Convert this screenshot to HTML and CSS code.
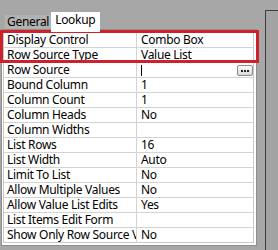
FILE: index.html
```html
<html>
<head>
<meta charset="UTF-8">
<title>Property Sheet - Lookup</title>
<link rel="stylesheet" href="styles.css">
</head>
<body>

<div class="wrap">
	<div class="props">
		<div class="tabs">
			<span class="tab">General</span>
			<span class="tab on">Lookup</span>
		</div>
		<div class="sheet">
			<div class="grid">
				<div class="row"><div class="name">Display Control</div><div class="val">Combo Box</div></div>
				<div class="row"><div class="name">Row Source Type</div><div class="val">Value List</div></div>
				<div class="row"><div class="name">Row Source</div><div class="val"><span class="caret"></span>
					<span class="dots"><svg width="14" height="9" viewBox="0 0 14 9"><rect x="3" y="4" width="2" height="2"/><rect x="6" y="4" width="2" height="2"/><rect x="9" y="4" width="2" height="2"/></svg></span>
				</div></div>
				<div class="row"><div class="name">Bound Column</div><div class="val">1</div></div>
				<div class="row"><div class="name">Column Count</div><div class="val">1</div></div>
				<div class="row"><div class="name">Column Heads</div><div class="val">No</div></div>
				<div class="row"><div class="name">Column Widths</div><div class="val"></div></div>
				<div class="row"><div class="name">List Rows</div><div class="val">16</div></div>
				<div class="row"><div class="name">List Width</div><div class="val">Auto</div></div>
				<div class="row"><div class="name">Limit To List</div><div class="val">No</div></div>
				<div class="row"><div class="name">Allow Multiple Values</div><div class="val">No</div></div>
				<div class="row"><div class="name">Allow Value List Edits</div><div class="val">Yes</div></div>
				<div class="row"><div class="name">List Items Edit Form</div><div class="val"></div></div>
				<div class="row"><div class="name">Show Only Row Source V</div><div class="val">No</div></div>
			</div>
		</div>
	</div>
	<div class="side"></div>
</div>

<!-- highlight round the first two properties -->
<div class="mark"></div>

</body>
</html>
```

FILE: styles.css
```css
body {
	margin: 0px;
	padding: 0px;
	background: #a7a7a7;
	color: #000;
	font-family: "Noto Sans", Arial, sans-serif;
	font-size: 12px;
	letter-spacing: -0.3px;
	width: 278px;
	height: 250px;
	overflow: hidden;
	position: relative;
}

.wrap {
	display: flex;
	height: 250px;
}

.props {
	width: 257px;
}

.tabs {
	display: flex;
	align-items: flex-end;
	height: 17px;
	padding-top: 12px;
	padding-left: 5px;
}

.tab {
	height: 14px;
	line-height: 14px;
	padding: 0px 2px;
	background: #b2b2b2;
	white-space: nowrap;
}

.tab.on {
	position: relative;
	z-index: 1;
	height: 20px;
	line-height: 15px;
	padding: 0px 5px 0px 4px;
	margin-bottom: -3px;
	background: #fff;
}

.sheet {
	margin-left: 1px;
	border: 1px solid #8e8e8e;
	background: #fff;
	padding: 2px 2px 2px 1px;
	width: 251px;
}

.grid {
	border: 1px solid #c9c9c9;
}

.row {
	display: flex;
	height: 14px;
	line-height: 14px;
	border-bottom: 1px solid #d3d3d3;
}

.row:last-child {
	border-bottom: 0px;
}

.name {
	width: 129px;
	padding-left: 3px;
	border-right: 1px solid #d3d3d3;
	white-space: nowrap;
	overflow: hidden;
}

.val {
	flex: 1;
	padding-left: 4px;
	position: relative;
	white-space: nowrap;
}

.caret {
	position: absolute;
	left: 4px;
	top: 2px;
	width: 1px;
	height: 11px;
	background: #000;
}

.dots {
	position: absolute;
	right: 0px;
	top: 2px;
	width: 14px;
	height: 9px;
	border: 1px solid #8a8a8a;
	border-radius: 2px;
	background: linear-gradient(#fafafa, #d8d8d8);
	line-height: 0px;
}

.dots svg {
	fill: #222;
}

.side {
	margin-left: 8px;
	margin-top: 10px;
	flex: 1;
	border-left: 1px solid #3c3c3c;
	border-top: 1px solid #3c3c3c;
	background: #a3a3a3;
}

.mark {
	position: absolute;
	left: 0px;
	top: 30px;
	width: 253px;
	height: 27px;
	border: 3px solid #cf2129;
}
```
